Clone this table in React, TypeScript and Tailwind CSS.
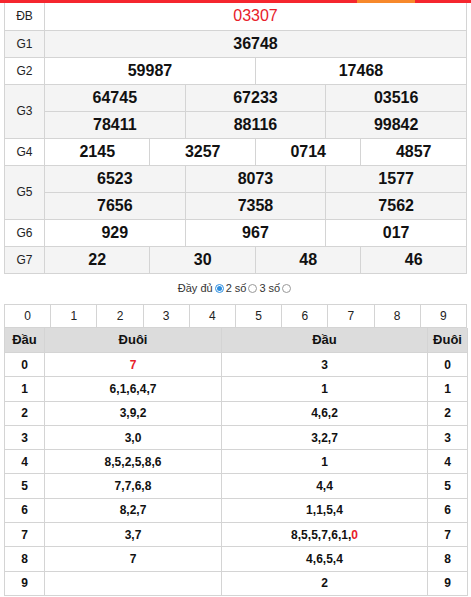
import React from "react";

const font = { fontFamily: '"Liberation Sans", Arial, sans-serif' };

type Prize = { label: string; rows: string[][]; special?: boolean };

const prizes: Prize[] = [
  { label: "ĐB", rows: [["03307"]], special: true },
  { label: "G1", rows: [["36748"]] },
  { label: "G2", rows: [["59987", "17468"]] },
  { label: "G3", rows: [["64745", "67233", "03516"], ["78411", "88116", "99842"]] },
  { label: "G4", rows: [["2145", "3257", "0714", "4857"]] },
  { label: "G5", rows: [["6523", "8073", "1577"], ["7656", "7358", "7562"]] },
  { label: "G6", rows: [["929", "967", "017"]] },
  { label: "G7", rows: [["22", "30", "48", "46"]] },
];

// head/tail table, red marks the special prize tail
const loto: { d: string; tail: string[]; head: string[] }[] = [
  { d: "0", tail: ["7*"], head: ["3"] },
  { d: "1", tail: ["6", "1", "6", "4", "7"], head: ["1"] },
  { d: "2", tail: ["3", "9", "2"], head: ["4", "6", "2"] },
  { d: "3", tail: ["3", "0"], head: ["3", "2", "7"] },
  { d: "4", tail: ["8", "5", "2", "5", "8", "6"], head: ["1"] },
  { d: "5", tail: ["7", "7", "6", "8"], head: ["4", "4"] },
  { d: "6", tail: ["8", "2", "7"], head: ["1", "1", "5", "4"] },
  { d: "7", tail: ["3", "7"], head: ["8", "5", "5", "7", "6", "1", "0*"] },
  { d: "8", tail: ["7"], head: ["4", "6", "5", "4"] },
  { d: "9", tail: [], head: ["2"] },
];

function Nums({ list }: { list: string[] }) {
  return (
    <>
      {list.map((n, i) => (
        <React.Fragment key={i}>
          {i > 0 && ","}
          {n.endsWith("*") ? <span className="text-[#e8202a]">{n[0]}</span> : n}
        </React.Fragment>
      ))}
    </>
  );
}

function Radio({ checked }: { checked?: boolean }) {
  return (
    <span
      className={`inline-flex items-center justify-center w-[9px] h-[9px] rounded-full border mx-[2px] align-[-1px] ${
        checked ? "border-[#2f8fe0] bg-white" : "border-[#999] bg-white"
      }`}
    >
      {checked && <span className="w-[5px] h-[5px] rounded-full bg-[#2f8fe0]" />}
    </span>
  );
}

export default function App() {
  return (
    <div className="w-[471px] bg-white text-[#111]" style={font}>
      {/* top bar */}
      <div className="flex h-[3px]">
        <div className="flex-1 bg-[#f5262e]" />
        <div className="w-[58px] bg-[#f7892b]" />
        <div className="w-[56px] bg-[#f5262e]" />
      </div>

      <div className="px-[4px]">
        <table className="w-[463px] table-fixed border-collapse">
          <colgroup>
            <col className="w-[40px]" />
            {Array.from({ length: 12 }).map((_, i) => (
              <col key={i} />
            ))}
          </colgroup>
          <tbody>
            {prizes.map((p, pi) =>
              p.rows.map((row, ri) => (
                <tr key={`${pi}-${ri}`} className={`h-[27px] ${pi % 2 ? "bg-[#f4f4f4]" : "bg-white"}`}>
                  {ri === 0 && (
                    <td
                      rowSpan={p.rows.length}
                      className={`border border-[#d4d4d4] text-center text-[12px] text-[#222] p-0 ${pi === 0 ? "border-t-0" : ""}`}
                    >
                      {p.label}
                    </td>
                  )}
                  {row.map((n, ni) => (
                    <td
                      key={ni}
                      colSpan={12 / row.length}
                      className={`border border-[#d4d4d4] text-center text-[16px] font-bold p-0 leading-[26px] ${
                        p.special ? "text-[#e8202a] font-normal border-t-0" : ""
                      }`}
                    >
                      {n}
                    </td>
                  ))}
                </tr>
              ))
            )}
          </tbody>
        </table>

        <div className="flex justify-center items-center h-[30px] text-[11px] text-[#333]">
          Đầy đủ <Radio checked /> 2 số <Radio /> 3 số <Radio />
        </div>

        <table className="w-[463px] table-fixed border-collapse">
          <tbody>
            <tr className="h-[23px]">
              {Array.from({ length: 10 }).map((_, i) => (
                <td key={i} className="border border-[#d4d4d4] text-center text-[12px] text-[#222] p-0">
                  {i}
                </td>
              ))}
            </tr>
          </tbody>
        </table>

        <table className="w-[463px] table-fixed border-collapse border-t-0">
          <colgroup>
            <col className="w-[40px]" />
            <col className="w-[177px]" />
            <col className="w-[206px]" />
            <col className="w-[40px]" />
          </colgroup>
          <thead>
            <tr className="h-[25px] bg-[#dcdcdc] text-[13px] font-bold">
              <th className="border border-t-0 border-[#d4d4d4] p-0">Đầu</th>
              <th className="border border-t-0 border-[#d4d4d4] p-0">Đuôi</th>
              <th className="border border-t-0 border-[#d4d4d4] p-0">Đầu</th>
              <th className="border border-t-0 border-[#d4d4d4] p-0">Đuôi</th>
            </tr>
          </thead>
          <tbody>
            {loto.map((r) => (
              <tr key={r.d} className="h-[24.3px] text-[12px] font-bold text-center">
                <td className="border border-[#d4d4d4] p-0">{r.d}</td>
                <td className="border border-[#d4d4d4] p-0">
                  <Nums list={r.tail} />
                </td>
                <td className="border border-[#d4d4d4] p-0">
                  <Nums list={r.head} />
                </td>
                <td className="border border-[#d4d4d4] p-0">{r.d}</td>
              </tr>
            ))}
          </tbody>
        </table>
      </div>
    </div>
  );
}
